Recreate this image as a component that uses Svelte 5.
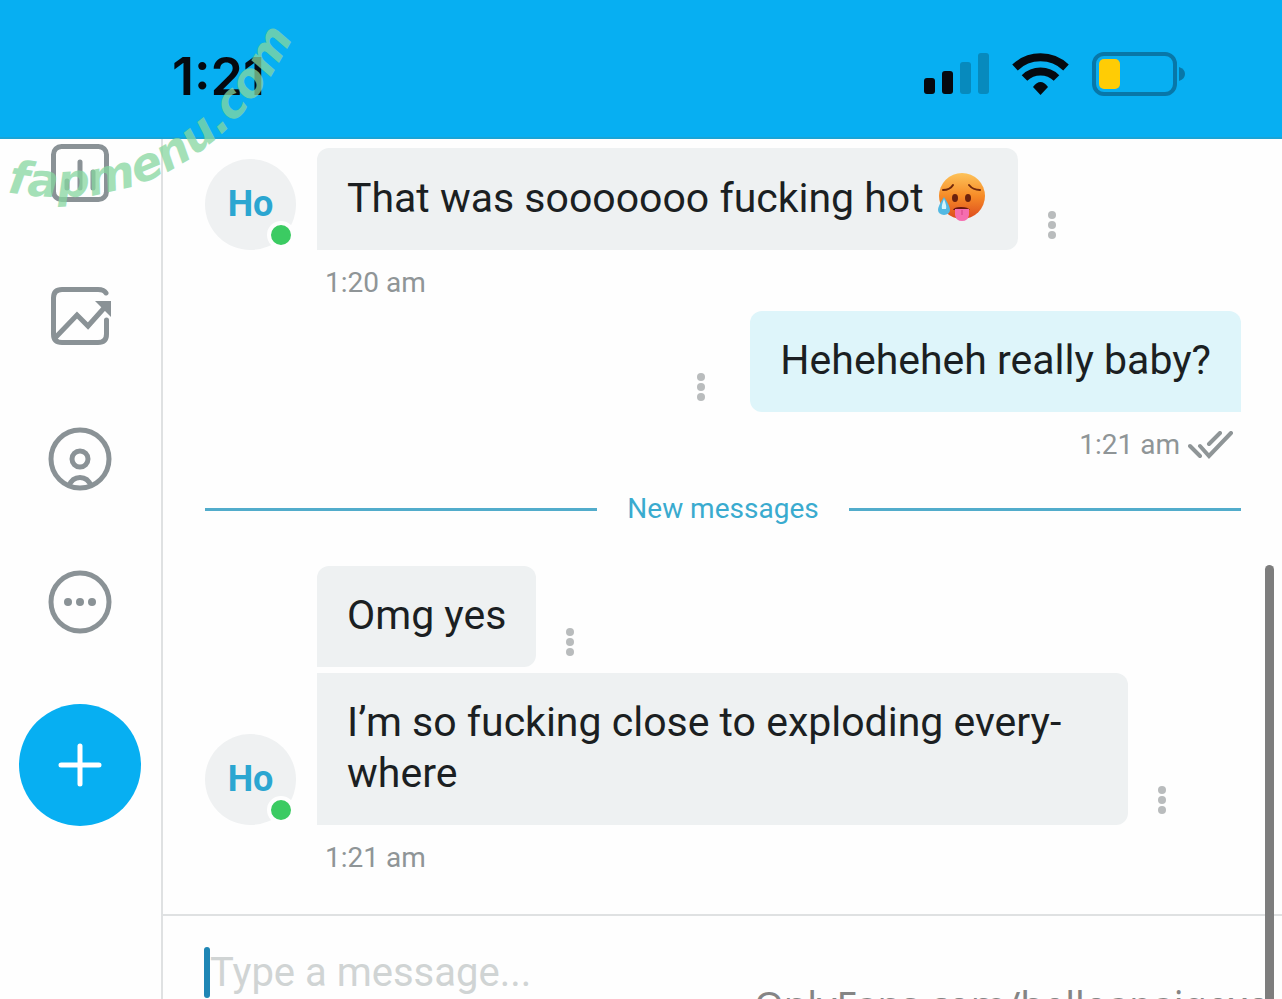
<script lang="ts">
	interface Message {
		text: string;
		emoji?: boolean;
		sent?: boolean;
		time?: string;
		unread?: boolean;
		stacked?: boolean;
	}

	const messages: Message[] = [
		{ text: 'That was sooooooo fucking hot', emoji: true, time: '1:20 am' },
		{ text: 'Heheheheh really baby?', sent: true, time: '1:21 am' },
		{ text: 'Omg yes', unread: true },
		{
			text: 'I’m so fucking close to exploding every\u00ADwhere',
			stacked: true,
			time: '1:21 am'
		}
	];

	let draft = $state('');
</script>

<div class="app">
	<header class="status-bar">
		<time class="clock">1:21</time>
		<div class="status-icons">
			<svg class="signal" width="66" height="42" viewBox="0 0 66 42" aria-label="Signal">
				<rect x="0" y="25" width="11" height="16" rx="3" fill="#06090f" />
				<rect x="18" y="18" width="11" height="23" rx="3" fill="#06090f" />
				<rect x="36" y="9" width="11" height="32" rx="3" fill="#078abd" />
				<rect x="54" y="0" width="11" height="41" rx="3" fill="#078abd" />
			</svg>
			<svg class="wifi" width="58" height="42" viewBox="0 0 58 42" aria-label="Wi-Fi">
				<g fill="none" stroke="#06090f" stroke-width="8">
					<path d="M3 14.500A37 37 0 0 1 54 14.500" />
					<path d="M12.500 25A23 23 0 0 1 44.500 25" />
				</g>
				<path d="M28.500 42L21 34Q28.500 24 36 34Z" fill="#06090f" />
			</svg>
			<svg class="battery" width="94" height="44" viewBox="0 0 94 44" aria-label="Battery">
				<rect x="2" y="2" width="81" height="40" rx="10" fill="none" stroke="#0877a8" stroke-width="4" />
				<rect x="7" y="7" width="21" height="30" rx="5" fill="#ffcc05" />
				<path d="M87 15Q93 17 93 22T87 29Z" fill="#0877a8" />
			</svg>
		</div>
	</header>

	<div class="body">
		<nav class="sidebar">
			<button type="button" aria-label="Statistics">
				<svg width="64" height="64" viewBox="0 0 64 64">
					<rect x="5.500" y="5.500" width="53" height="53" rx="8" />
					<path d="M19 40v7M32 21v26M45 31v16" stroke-linecap="round" />
				</svg>
			</button>
			<button type="button" aria-label="Trends">
				<svg width="64" height="64" viewBox="0 0 64 64">
					<path d="M58 9Q56 5.500 50 5.500H14Q5.500 5.500 5.500 14V50Q5.500 58.500 14 58.500H50Q58.500 58.500 58.500 50V36" stroke-linecap="round" />
					<path d="M7 54L29 31L40 42L57 23" />
					<path class="solid" d="M47 17H63V33Z" />
				</svg>
			</button>
			<button type="button" aria-label="Profile">
				<svg width="64" height="64" viewBox="0 0 64 64">
					<circle cx="32" cy="32" r="29" />
					<circle cx="32" cy="32" r="8" />
					<path d="M21 59Q24 50.500 32 50.500T43 59" />
				</svg>
			</button>
			<button type="button" aria-label="More">
				<svg width="64" height="64" viewBox="0 0 64 64">
					<circle cx="32" cy="32" r="29" />
					<circle class="solid" cx="20" cy="32" r="4" />
					<circle class="solid" cx="32" cy="32" r="4" />
					<circle class="solid" cx="44" cy="32" r="4" />
				</svg>
			</button>
			<button type="button" class="new-post" aria-label="New post">
				<svg width="44" height="44" viewBox="0 0 44 44">
					<path d="M22 3v38M3 22h38" stroke-linecap="round" />
				</svg>
			</button>
		</nav>

		<main class="chat">
			<div class="messages">
				{#each messages as message}
					{#if message.unread}
						<div class="divider"><span>New messages</span></div>
					{/if}
					<div class="message" class:sent={message.sent} class:stacked={message.stacked}>
						<div class="row">
							{#if !message.sent}
								<div class="avatar-slot">
									{#if message.time}
										<div class="avatar">Ho<span class="online"></span></div>
									{/if}
								</div>
							{/if}
							<p class="bubble">
								{message.text}
								{#if message.emoji}
									<svg class="emoji" width="48" height="50" viewBox="0 0 48 50" role="img" aria-label="Hot face">
										<defs>
											<linearGradient id="face" x1="0" y1="0" x2="0" y2="1">
												<stop offset="0" stop-color="#fdc35a" />
												<stop offset="0.5" stop-color="#f68b27" />
												<stop offset="1" stop-color="#dd4b1e" />
											</linearGradient>
										</defs>
										<circle cx="25" cy="24" r="23" fill="url(#face)" />
										<path d="M6 18Q13 18 16 13M32 13Q36 18 43 18" fill="none" stroke="#70280c" stroke-width="2" stroke-linecap="round" />
										<ellipse cx="18" cy="26" rx="3" ry="4" fill="#6b210d" />
										<ellipse cx="31" cy="26" rx="3" ry="4" fill="#6b210d" />
										<path d="M16 38Q17 35 24 35T33 38Z" fill="#681510" />
										<path d="M18 37H32V43Q31 49 25 49T18 43Z" fill="#f56eb0" />
										<path d="M25 38V43" stroke="#d64286" stroke-width="1" />
										<path d="M7 25Q13 34 13 38A6 5 0 0 1 1 38Q1 34 7 25Z" fill="#52b9e3" />
										<path d="M7 27Q10 34 9 37H5Q4 34 7 27Z" fill="#d5f4fb" />
									</svg>
								{/if}
							</p>
							<button type="button" class="menu" aria-label="Message options">
								<svg width="10" height="30" viewBox="0 0 10 30">
									<circle cx="5" cy="5" r="4" />
									<circle cx="5" cy="15" r="4" />
									<circle cx="5" cy="25" r="4" />
								</svg>
							</button>
						</div>
						{#if message.time}
							<div class="meta">
								<time>{message.time}</time>
								{#if message.sent}
									<svg width="46" height="28" viewBox="0 0 46 28" aria-label="Read">
										<path d="M2 15L12 25M12 15L21 25L43 2M21 13L32 2" />
									</svg>
								{/if}
							</div>
						{/if}
					</div>
				{/each}
			</div>

			<form class="composer">
				<span class="caret"></span>
				<input type="text" bind:value={draft} placeholder="Type a message..." aria-label="Type a message" />
			</form>
		</main>
	</div>

	<div class="scrollbar"></div>
	<svg class="site-mark" width="320" height="230" viewBox="0 0 320 230">
		<path id="site-curve" d="M7 192C130 215 240 160 304 14" fill="none" />
		<text><textPath href="#site-curve">fapmenu.com</textPath></text>
	</svg>
	<span class="page-mark">OnlyFans.com/helloapaigexo</span>
</div>

<style>
	:global(body) {
		margin: 0;
		background: #fefefe;
	}

	.app {
		position: relative;
		display: flex;
		flex-direction: column;
		height: 100vh;
		overflow: hidden;
		font-family: Roboto, 'Liberation Sans', sans-serif;
		color: #1b1f22;
	}

	button {
		padding: 0;
		border: none;
		background: none;
		cursor: pointer;
	}

	svg {
		display: block;
	}

	.status-bar {
		display: flex;
		align-items: center;
		justify-content: space-between;
		flex-shrink: 0;
		box-sizing: border-box;
		height: 139px;
		padding: 11px 96px 0 172px;
		background: #07aff2;
		border-bottom: 2px solid #1aa4d6;
	}

	.clock {
		padding-top: 4px;
		font-family: Inter, sans-serif;
		font-size: 52px;
		font-weight: 600;
		color: #06090f;
	}

	.status-icons {
		display: flex;
		align-items: center;
		gap: 22px;
	}

	.body {
		display: flex;
		flex: 1;
	}

	.sidebar {
		display: flex;
		flex-direction: column;
		align-items: center;
		flex-shrink: 0;
		gap: 79px;
		width: 159px;
		padding: 2px 2px 0 0;
		border-right: 2px solid #dfe1e2;
	}

	.sidebar svg {
		fill: none;
		stroke: #8a9296;
		stroke-width: 5;
	}

	.sidebar .solid {
		fill: #8a9296;
		stroke: none;
	}

	.sidebar .new-post {
		display: flex;
		align-items: center;
		justify-content: center;
		width: 122px;
		height: 122px;
		margin-top: -9px;
		border-radius: 50%;
		background: #07aff2;
	}

	.sidebar .new-post svg {
		stroke: #fff;
	}

	.chat {
		flex: 1;
		min-width: 0;
	}

	.messages {
		padding: 9px 41px 28px 42px;
	}

	.row {
		display: flex;
		align-items: flex-end;
		margin-bottom: 6px;
		padding-right: 45px;
	}

	.row:has(+ .meta) {
		margin-bottom: 0;
	}

	.sent .row {
		flex-direction: row-reverse;
		padding-right: 0;
	}

	.avatar-slot {
		flex-shrink: 0;
		width: 112px;
	}

	.avatar {
		position: relative;
		width: 91px;
		border-radius: 50%;
		background: #eff1f2;
		font-size: 36px;
		font-weight: 700;
		line-height: 91px;
		text-align: center;
		color: #2ba6d1;
	}

	.online {
		position: absolute;
		right: 1px;
		bottom: 1px;
		width: 20px;
		height: 20px;
		border: 4px solid #fefefe;
		border-radius: 50%;
		background: #3bcb62;
	}

	.bubble {
		margin: 0;
		padding: 24px 30px 26px;
		border-radius: 12px 12px 12px 0;
		background: #eef1f2;
		font-size: 41px;
		line-height: 51px;
	}

	.stacked .bubble {
		border-top-left-radius: 0;
	}

	.sent .bubble {
		border-radius: 12px 12px 0 12px;
		background: #def5fa;
	}

	.emoji {
		display: inline-block;
		margin: 0 3px;
		vertical-align: -10px;
	}

	.menu {
		display: flex;
		justify-content: center;
		flex-shrink: 0;
		width: 68px;
		padding-bottom: 10px;
	}

	.sent .menu {
		margin-right: 15px;
	}

	.menu svg {
		fill: #b9bcbd;
	}

	.meta {
		display: flex;
		align-items: center;
		gap: 8px;
		box-sizing: border-box;
		height: 61px;
		padding: 4px 7px 0 120px;
		font-size: 28px;
		line-height: 34px;
		color: #8f9597;
	}

	.sent .meta {
		justify-content: flex-end;
	}

	.meta svg {
		fill: none;
		stroke: #8f9597;
		stroke-width: 4;
		stroke-linecap: round;
	}

	.divider {
		display: flex;
		align-items: center;
		gap: 30px;
		padding: 19px 0 40px;
		font-size: 28px;
		line-height: 34px;
		color: #3aabcf;
	}

	.divider::before,
	.divider::after {
		content: '';
		flex: 1;
		height: 3px;
		background: #52accb;
	}

	.composer {
		display: flex;
		align-items: center;
		padding: 31px 41px;
		border-top: 2px solid #dfe1e2;
	}

	.caret {
		width: 6px;
		height: 51px;
		border-radius: 3px;
		background: #1f86b5;
	}

	.composer input {
		flex: 1;
		min-width: 0;
		height: 48px;
		padding: 0;
		border: none;
		outline: none;
		background: none;
		font: inherit;
		font-size: 40px;
	}

	.composer input::placeholder {
		color: #d0d4d4;
		opacity: 1;
	}

	.scrollbar {
		position: absolute;
		top: 565px;
		right: 8px;
		bottom: 0;
		width: 9px;
		border-radius: 5px 5px 0 0;
		background: #7d7d7d;
	}

	.site-mark {
		position: absolute;
		top: 0;
		left: 0;
		pointer-events: none;
		opacity: 0.75;
	}

	.site-mark text {
		font-family: 'DejaVu Sans', sans-serif;
		font-size: 46px;
		font-style: italic;
		font-weight: 700;
		fill: #86d7a0;
	}

	.page-mark {
		position: absolute;
		right: 12px;
		bottom: -29px;
		font-family: 'Noto Sans', sans-serif;
		font-size: 38px;
		line-height: 48px;
		color: #858585;
	}
</style>
